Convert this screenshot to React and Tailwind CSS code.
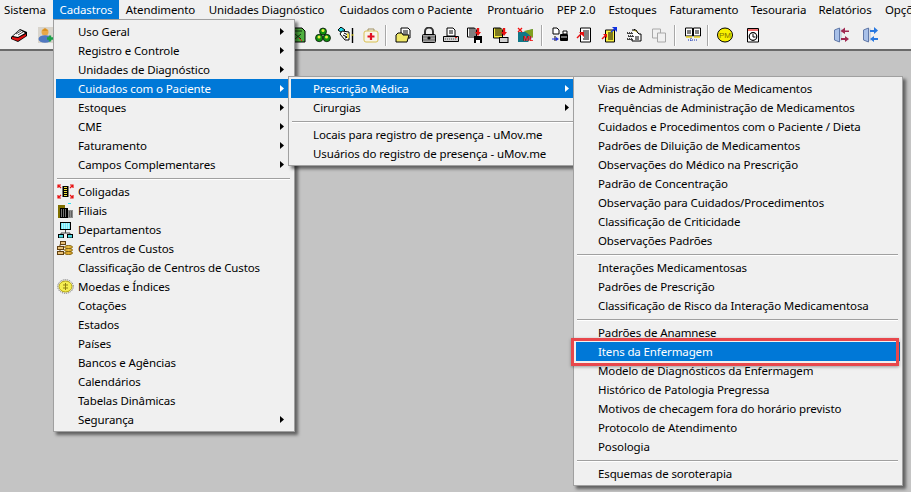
const menuBar = [
  ["Sistema", "w-[53px] justify-start pl-[4px]"],
  ["Cadastros", "w-[66px] justify-center bg-[#0078d7] text-white"],
  ["Atendimento", "w-[83px] justify-center"],
  ["Unidades Diagnóstico", "w-[129px] justify-center"],
  ["Cuidados com o Paciente", "w-[150px] justify-center"],
  ["Prontuário", "w-[69px] justify-center"],
  ["PEP 2.0", "w-[52px] justify-center"],
  ["Estoques", "w-[61px] justify-center"],
  ["Faturamento", "w-[82px] justify-center"],
  ["Tesouraria", "w-[67px] justify-center"],
  ["Relatórios", "w-[66px] justify-center"],
  ["Opções", "w-[33px] justify-start pl-[7px] overflow-hidden"],
];

const cadastros = [
  { label: "Uso Geral", sub: true },
  { label: "Registro e Controle", sub: true },
  { label: "Unidades de Diagnóstico", sub: true },
  { label: "Cuidados com o Paciente", sub: true, active: true },
  { label: "Estoques", sub: true },
  { label: "CME", sub: true },
  { label: "Faturamento", sub: true },
  { label: "Campos Complementares", sub: true },
  { sep: true },
  { label: "Coligadas", icon: "coligadas" },
  { label: "Filiais", icon: "filiais" },
  { label: "Departamentos", icon: "departamentos" },
  { label: "Centros de Custos", icon: "custos" },
  { label: "Classificação de Centros de Custos" },
  { label: "Moedas e Índices", icon: "moedas" },
  { label: "Cotações" },
  { label: "Estados" },
  { label: "Países" },
  { label: "Bancos e Agências" },
  { label: "Calendários" },
  { label: "Tabelas Dinâmicas" },
  { label: "Segurança", sub: true },
];

const cuidados = [
  { label: "Prescrição Médica", sub: true, active: true },
  { label: "Cirurgias", sub: true },
  { sep: true },
  { label: "Locais para registro de presença - uMov.me" },
  { label: "Usuários do registro de presença - uMov.me" },
];

const prescricao = [
  { label: "Vias de Administração de Medicamentos" },
  { label: "Frequências de Administração de Medicamentos" },
  { label: "Cuidados e Procedimentos com o Paciente / Dieta" },
  { label: "Padrões de Diluição de Medicamentos" },
  { label: "Observações do Médico na Prescrição" },
  { label: "Padrão de Concentração" },
  { label: "Observação para Cuidados/Procedimentos" },
  { label: "Classificação de Criticidade" },
  { label: "Observações Padrões" },
  { sep: true },
  { label: "Interações Medicamentosas" },
  { label: "Padrões de Prescrição" },
  { label: "Classificação de Risco da Interação Medicamentosa" },
  { sep: true },
  { label: "Padrões de Anamnese" },
  { label: "Itens da Enfermagem", active: true },
  { label: "Modelo de Diagnósticos da Enfermagem" },
  { label: "Histórico de Patologia Pregressa" },
  { label: "Motivos de checagem fora do horário previsto" },
  { label: "Protocolo de Atendimento" },
  { label: "Posologia" },
  { sep: true },
  { label: "Esquemas de soroterapia" },
];

function Arrow({ active }) {
  return (
    <svg width="4" height="7" viewBox="0 0 4 7" className="shrink-0">
      <path d="M0 0 L4 3.5 L0 7Z" fill={active ? "#fff" : "#000"} />
    </svg>
  );
}

const menuIcons = {
  coligadas: (
    <>
      <path d="M1 4V1h3M1 1l3 3M13 1h3v3M16 1l-3 3M1 11v3h3M1 14l3-3M13 14h3v-3M16 14l-3-3" fill="none" stroke="#e81010" strokeWidth="1.2" />
      <rect x="5.5" y="2" width="6" height="11" fill="#000" />
      <path d="M7 3.5h3M7 5.5h3M7 7.5h3M7 9.5h3M7 11.5h3" stroke="#f0e040" />
    </>
  ),
  filiais: (
    <>
      <path d="M11 0.5h3" stroke="#30e0f0" />
      <rect x="1" y="2" width="7" height="3" fill="#807000" />
      <rect x="1" y="5" width="3" height="10" fill="#807000" />
      <rect x="11" y="7" width="5" height="8" fill="#8c8c8c" />
      <rect x="3" y="5" width="8" height="10" fill="#000" />
      <path d="M4 7h6M4 9h6M4 11h6M4 13h6" stroke="#e8e8e8" strokeDasharray="1 1" />
      <path d="M12 9h4M12 11h4M12 13h4" stroke="#333" strokeDasharray="1 1" />
    </>
  ),
  departamentos: (
    <>
      <rect x="3.5" y="0.5" width="10" height="7" fill="#70e8f8" stroke="#000" />
      <path d="M5 2h7M5 4h7M5 6h7" stroke="#fff" strokeDasharray="1 1" />
      <path d="M8.5 8v3M4 13v-2h9v2" fill="none" stroke="#444" />
      <rect x="1.5" y="12.5" width="5" height="3.5" fill="#50d8e0" stroke="#000" />
      <rect x="10.5" y="12.5" width="5" height="3.5" fill="#50d8e0" stroke="#000" />
    </>
  ),
  custos: (
    <>
      <rect x="3.5" y="0.5" width="5" height="3" fill="#e8c078" stroke="#604010" />
      <rect x="0.5" y="5.5" width="6" height="3" fill="#e8c078" stroke="#604010" />
      <rect x="0.5" y="10.5" width="6" height="3" fill="#e8c078" stroke="#604010" />
      <path d="M3 3.5v2M3 8.5v2" stroke="#604010" />
      <ellipse cx="11.5" cy="6" rx="4" ry="1.5" fill="#f0c040" stroke="#806010" />
      <ellipse cx="11.5" cy="9" rx="4" ry="1.5" fill="#f0c040" stroke="#806010" />
      <ellipse cx="11.5" cy="12" rx="4" ry="1.5" fill="#e8b030" stroke="#806010" />
    </>
  ),
  moedas: (
    <>
      <ellipse cx="8.5" cy="7.5" rx="7.8" ry="6.8" fill="none" stroke="#666" strokeDasharray="1 1" />
      <ellipse cx="8.5" cy="7.5" rx="6.5" ry="5.5" fill="#f4ee50" stroke="#b0a010" />
      <path d="M8.5 4v7M6 6h5M6 9h5" stroke="#908010" />
    </>
  ),
};

function Menu({ items, className }) {
  return (
    <div className={`absolute bg-[#f0f0f0] border border-[#a0a0a0] p-[2px] shadow-[3px_3px_3px_rgba(0,0,0,0.5)] ${className}`}>
      {items.map((item, i) =>
        item.sep ? (
          <div key={i} className="h-[8px] flex items-center pl-[1px] pr-[2px]">
            <div className="w-full h-px bg-[#a0a0a0] shadow-[0_1px_0_#fff]" />
          </div>
        ) : (
          <div
            key={i}
            className={`relative h-[19px] flex items-center justify-between pl-[22px] pr-[8px] ${
              item.active ? "bg-[#0078d7] text-white" : "text-black"
            }`}
          >
            {item.icon && (
              <svg width="17" height="16" viewBox="0 0 17 16" className="absolute left-[1px] top-[2px]">
                {menuIcons[item.icon]}
              </svg>
            )}
            <span className="whitespace-nowrap">{item.label}</span>
            {item.sub && <Arrow active={item.active} />}
          </div>
        )
      )}
    </div>
  );
}

const docLines = <path d="M3 3h6M3 5h7M3 7h7M3 9h7" stroke="#000" />;

const toolIcons = [
  {
    ml: "ml-0",
    draw: (
      <>
        <path d="M0 10 L9 2 L16 5 L16 9 L7 15 L0 12Z" fill="#000" />
        <path d="M1 12 L7 14 L15 9 L15 7 L7 11 L1 10Z" fill="#e01010" />
        <path d="M2 9 L9 3 L14 6 L7 10Z" fill="#fff" />
        <path d="M5 7 L10 4 M7 8 L12 5" stroke="#000" strokeWidth="0.7" />
      </>
    ),
  },
  {
    ml: "ml-[11px]",
    draw: (
      <>
        <rect width="16" height="16" fill="#d8d4cc" />
        <circle cx="7" cy="5" r="3.5" fill="#e8a848" />
        <path d="M4 4l3-3 3 3z" fill="#d89020" />
        <ellipse cx="7" cy="12" rx="6.5" ry="3.8" fill="#5078c0" />
        <path d="M9 11.5h6M12 8.5v6" stroke="#18a048" strokeWidth="2.4" />
      </>
    ),
  },
  {
    ml: "ml-[236px]",
    draw: (
      <>
        <path d="M2 1h10l3 3v11H2z" fill="#50b040" stroke="#000" />
        <path d="M5 4h7M5 7l6 5M11 7l-6 5" stroke="#103010" />
        <path d="M9 11l3 3" stroke="#e02020" />
      </>
    ),
  },
  {
    ml: "ml-[9px]",
    draw: (
      <>
        <circle cx="8" cy="4.5" r="3.5" fill="#109010" stroke="#000" strokeWidth="0.7" />
        <circle cx="4.2" cy="11" r="3.7" fill="#109010" stroke="#000" strokeWidth="0.7" />
        <circle cx="11.8" cy="11" r="3.7" fill="#109010" stroke="#000" strokeWidth="0.7" />
        <circle cx="8" cy="3.5" r="1.5" fill="#e8f040" />
        <circle cx="4" cy="10" r="1.5" fill="#e8f040" />
        <circle cx="11.5" cy="10" r="1.5" fill="#e8f040" />
      </>
    ),
  },
  {
    ml: "ml-[7px]",
    draw: (
      <>
        <path d="M0 3l3-3 4 3-3 3z" fill="#20d8e8" stroke="#000" />
        <path d="M4 4l7 1v8H7L2 7z" fill="#fff" stroke="#000" />
        <path d="M6 6l4 2M5 8l4 2M7 11l3-1" stroke="#000" />
        <path d="M9 6l2 1v4H9z" fill="#f0e040" />
        <path d="M14.5 1v15" stroke="#000" strokeWidth="1.4" />
        <path d="M13 8h3" stroke="#f0e040" />
      </>
    ),
  },
  {
    ml: "ml-[9px]",
    draw: (
      <>
        <path d="M5 4V2h6v2" fill="none" stroke="#a09060" />
        <rect x="1" y="4" width="14" height="11" rx="2" fill="#f8f4e8" stroke="#d8c050" />
        <path d="M8 6v7M4.500 9.500h7" stroke="#e01020" strokeWidth="2.2" />
      </>
    ),
  },
  { sep: true, ml: "ml-[6px]" },
  {
    ml: "ml-[8px]",
    draw: (
      <>
        <path d="M6 1h7l2 2v8H6z" fill="#fff" stroke="#000" />
        <path d="M8 4h5M8 6h5M8 8h5" stroke="#000" />
        <path d="M1 8l2-2h4l1 2h6l-2 7H1z" fill="#f0e868" stroke="#000" />
      </>
    ),
  },
  {
    ml: "ml-[10px]",
    draw: (
      <>
        <path d="M4 8V4.500a4 4 0 0 1 8 0V8" fill="none" stroke="#333" strokeWidth="2" />
        <rect x="1.500" y="7.500" width="13" height="8" rx="1" fill="#a0a0a0" stroke="#000" />
        <path d="M2 10h12M2 13h12" stroke="#666" />
        <circle cx="8" cy="11" r="1.600" fill="#000" />
      </>
    ),
  },
  {
    ml: "ml-[6px]",
    draw: (
      <>
        <path d="M4 1h6l2 2v6H4z" fill="#fff" stroke="#000" />
        <path d="M6 4h4M6 6h4" stroke="#000" />
        <path d="M0.500 9.500h15v5h-15z" fill="#d0d0d0" stroke="#000" />
        <path d="M2 12h12" stroke="#555" strokeDasharray="1 1" />
        <path d="M12 10.500h2" stroke="#e02020" />
      </>
    ),
  },
  {
    ml: "ml-[8px]",
    draw: (
      <>
        <path d="M0.500 1h7l2 2v7h-9z" fill="#fff" stroke="#000" />
        <g transform="translate(-1 -1)">{docLines}</g>
        <rect x="7" y="9" width="8" height="7" fill="#000" />
        <rect x="9" y="13" width="4" height="3" fill="#fff" />
        <path d="M11 1v4" stroke="#e81010" strokeWidth="2.4" />
        <path d="M8 5h6l-3 4z" fill="#e81010" />
      </>
    ),
  },
  {
    ml: "ml-[10px]",
    draw: (
      <>
        <path d="M0.500 1h7l2 2v8h-9z" fill="#f8f040" stroke="#000" />
        <g transform="translate(-1 -1)">{docLines}</g>
        <rect x="6.500" y="10.500" width="8.500" height="5" fill="#d0d0d0" stroke="#000" />
        <path d="M11 1v4" stroke="#e81010" strokeWidth="2.4" />
        <path d="M8 5h6l-3 4z" fill="#e81010" />
      </>
    ),
  },
  {
    ml: "ml-[8px]",
    draw: (
      <>
        <path d="M1 15V5h5L16 2v7l-5 6z" fill="#107888" />
        <path d="M7 4l9-2v9l-6-5z" fill="#80a020" />
        <path d="M1 1l4 4M5 1L1 5" stroke="#f01010" strokeWidth="1.3" />
        <text x="6" y="14" fontSize="8" fontWeight="700" fill="#f01010" fontFamily="Liberation Sans, sans-serif">ML</text>
      </>
    ),
  },
  { sep: true, ml: "ml-[8px]" },
  {
    ml: "ml-[9px]",
    draw: (
      <>
        <path d="M1 1h4l2 2v4H1z" fill="#fff" stroke="#000" />
        <path d="M3 9v5" stroke="#000" />
        <path d="M0 12h5" stroke="#2030e0" />
        <path d="M4 10l3 2-3 2z" fill="#2030e0" />
        <path d="M11 4h4v3h-4z" fill="#fff" stroke="#000" />
        <rect x="8" y="7" width="8" height="7" rx="1" fill="#000" />
        <path d="M9 10h6" stroke="#ddd" />
      </>
    ),
  },
  {
    ml: "ml-[8px]",
    draw: (
      <>
        <path d="M4.500 1h10v14h-10z" fill="#fff" stroke="#000" />
        <path d="M7 4h6M8 6h5M8 8h5M8 10h5M7 12h6" stroke="#000" />
        <path d="M1 11l5-5" stroke="#e81010" strokeWidth="1.4" />
        <path d="M3 5h5v5z" fill="#e81010" />
      </>
    ),
  },
  {
    ml: "ml-[9px]",
    draw: (
      <>
        <path d="M4.500 3h9v12h-9z" fill="#f8f040" stroke="#000" />
        <path d="M7 6h5M7 8h5M7 10h5M7 12h5" stroke="#000" />
        <path d="M1 12l4-4" stroke="#e81010" strokeWidth="1.4" />
        <path d="M2 7h4v4z" fill="#e81010" />
        <path d="M10 5l4-3" stroke="#1030e0" strokeWidth="1.4" />
        <path d="M11 0h5v5z" fill="#1030e0" />
      </>
    ),
  },
  {
    ml: "ml-[9px]",
    draw: (
      <>
        <path d="M8 2l5 5h2v7H6v-2" fill="#fff" stroke="#000" />
        <path d="M1 5h6v2H1zM2 8h6v2H2zM1 11h6v2H1z" fill="#444" />
        <path d="M2 5.500h5M3 8.500h5M2 11.500h5" stroke="#eee" strokeDasharray="1 1" />
        <path d="M6 3h4l2 3" fill="#f0e060" stroke="#000" />
        <path d="M9 10h4M9 12h4" stroke="#000" />
      </>
    ),
  },
  {
    ml: "ml-[9px]",
    draw: (
      <>
        <path d="M1.500 2h8v9h-8z" fill="#f0f0f0" stroke="#a8a8a8" />
        <path d="M6.500 6h8v9h-8z" fill="#f0f0f0" stroke="#a8a8a8" />
      </>
    ),
  },
  { sep: true, ml: "ml-[7px]" },
  {
    ml: "ml-[9px]",
    draw: (
      <>
        <path d="M0.500 1h7v8h-7zM8.500 1h7v8h-7z" fill="#fff" stroke="#000" />
        <path d="M2 4h4M2 6h4M10 4h4M10 6h4" stroke="#000" />
        <path d="M1 10h6M9 10h6" stroke="#e8d020" strokeWidth="1.4" />
        <path d="M6 11v4M3 13h10" stroke="#1030b0" strokeDasharray="1 1" />
      </>
    ),
  },
  { sep: true, ml: "ml-[6px]" },
  {
    ml: "ml-[8px]",
    draw: (
      <>
        <ellipse cx="8" cy="8" rx="7.500" ry="7" fill="#f8f000" stroke="#000" />
        <text x="8" y="11" fontSize="8" textAnchor="middle" fill="#807000" fontFamily="Liberation Sans, sans-serif">PM</text>
      </>
    ),
  },
  {
    ml: "ml-[12px]",
    draw: (
      <>
        <path d="M2.500 1.500h11v13.500h-11z" fill="#fff" stroke="#000" />
        <path d="M3 3h10" stroke="#e81010" strokeWidth="1.2" />
        <circle cx="8" cy="9.500" r="3.800" fill="#fff" stroke="#000" strokeWidth="1.2" />
        <path d="M8 7v3h2.500" fill="none" stroke="#000" />
      </>
    ),
  },
  {
    ml: "ml-[72px]",
    draw: (
      <>
        <path d="M1.500 3l5-2v14l-5-2z" fill="#a8c0e8" stroke="#6078a8" />
        <path d="M8 1.500V14" stroke="#b0c0d8" />
        <path d="M16 3.500H12V0.500L7.500 4 12 7V5h4z" fill="#a02850" />
        <path d="M8 11h4V9l4 3-4 3v-2H8z" fill="#a02850" />
      </>
    ),
  },
  {
    ml: "ml-[13px]",
    draw: (
      <>
        <path d="M1.500 3l5-2v14l-5-2z" fill="#a8c0e8" stroke="#6078a8" />
        <path d="M8 1.500V14" stroke="#b0c0d8" />
        <path d="M8 3h4V0l4 3.500L12 7V5H8z" fill="#2878e0" />
        <path d="M16 11h-4V9l-4 3 4 3v-2h4z" fill="#2878e0" />
      </>
    ),
  },
];

export default function App() {
  return (
    <div className="relative w-[911px] h-[492px] overflow-hidden bg-[#c4c4c4] text-[11.5px] tracking-[-0.12px] leading-none text-black font-['Noto_Sans',sans-serif]">
      <div className="flex h-[19px] bg-[#f0f0f0]">
        {menuBar.map(([label, cls]) => (
          <div key={label} className={`${cls} h-full shrink-0 flex items-center whitespace-nowrap`}>
            {label}
          </div>
        ))}
      </div>
      <div className="h-[32px] bg-[#f0f0f0] border-b-2 border-[#6a6a6a] flex items-center pl-[11px] pt-[2px]">
        {toolIcons.map((tool, i) =>
          tool.sep ? (
            <div key={i} className={`${tool.ml} w-[2px] h-[21px] bg-[#a8a8a8] border-r border-white shrink-0`} />
          ) : (
            <svg key={i} width="16" height="16" viewBox="0 0 16 16" className={`${tool.ml} shrink-0`}>
              {tool.draw}
            </svg>
          )
        )}
      </div>
      <Menu items={cadastros} className="left-[53px] top-[19px] w-[242px]" />
      <Menu items={cuidados} className="left-[288px] top-[76px] w-[292px]" />
      <Menu items={prescricao} className="left-[573px] top-[76px] w-[330px]" />
      <div className="absolute left-[571px] top-[338px] w-[328px] h-[28px] border-[3px] border-[#e8474c] shadow-[0_1px_3px_rgba(0,0,0,0.35)]" />
    </div>
  );
}
